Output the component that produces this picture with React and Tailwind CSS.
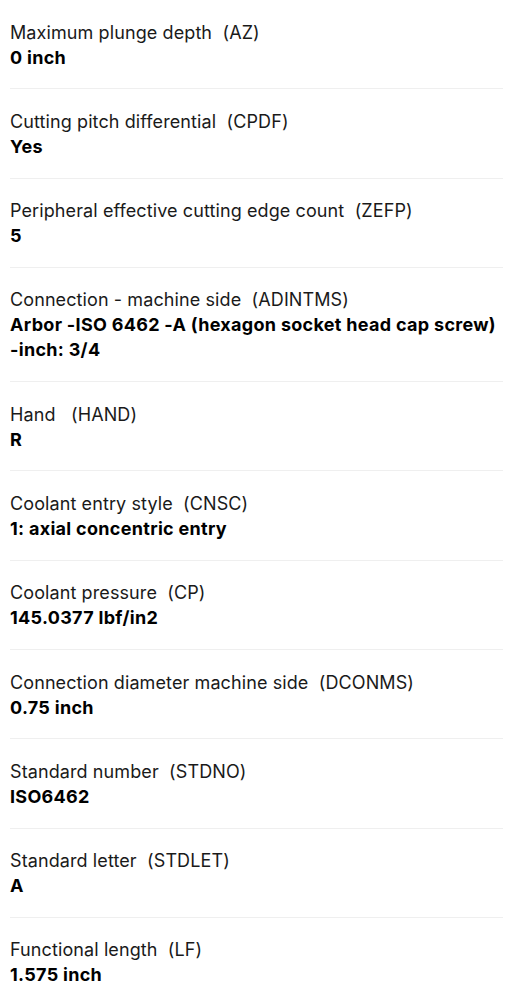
import React from "react";

const rows = [
  ["Maximum plunge depth", "AZ", "0 inch"],
  ["Cutting pitch differential", "CPDF", "Yes"],
  ["Peripheral effective cutting edge count", "ZEFP", "5"],
  ["Connection - machine side", "ADINTMS", "Arbor -ISO 6462 -A (hexagon socket head cap screw) -inch: 3/4"],
  ["Hand ", "HAND", "R"],
  ["Coolant entry style", "CNSC", "1: axial concentric entry"],
  ["Coolant pressure", "CP", "145.0377 lbf/in2"],
  ["Connection diameter machine side", "DCONMS", "0.75 inch"],
  ["Standard number", "STDNO", "ISO6462"],
  ["Standard letter", "STDLET", "A"],
  ["Functional length", "LF", "1.575 inch"],
];

export default function App() {
  return (
    <div className="bg-white min-h-screen px-[10px] font-['Inter',sans-serif] text-[#1a1a1a]">
      {rows.map(([label, code, value], i) => (
        <div
          key={i}
          className={`pt-[19.5px] pb-[18.8px] ${i < rows.length - 1 ? "border-b border-[#efefef]" : ""}`}
        >
          <div className="text-[18px] leading-[25px] tracking-[0.1px] whitespace-pre">
            {label}  ({code})
          </div>
          <div className="text-[18px] leading-[25px] font-bold tracking-[0.3px] text-black">{value}</div>
        </div>
      ))}
    </div>
  );
}
